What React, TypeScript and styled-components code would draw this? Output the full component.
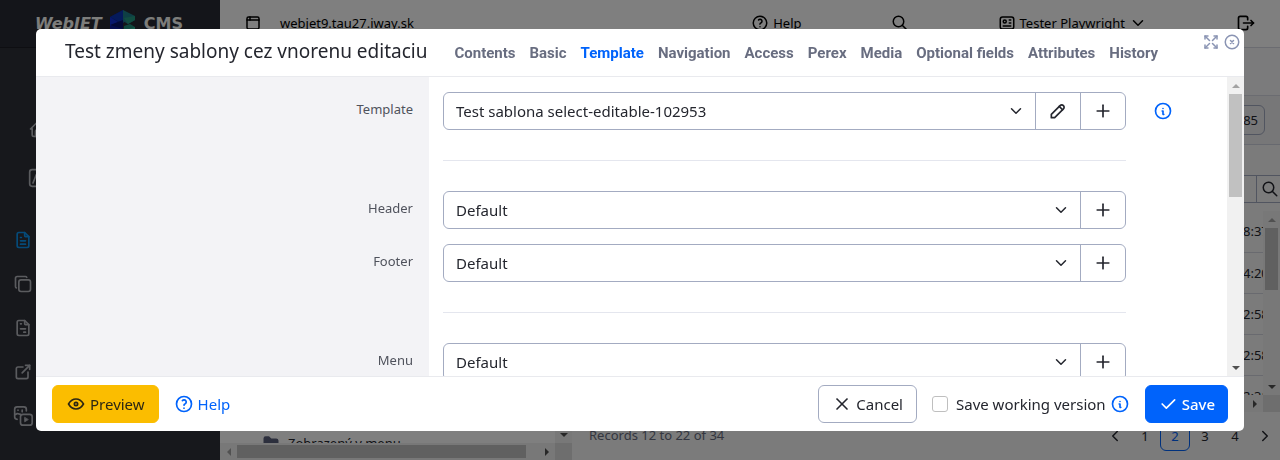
import React from "react";
import styled, { createGlobalStyle, css } from "styled-components";
import {
  TbArrowsMaximize,
  TbBrowser,
  TbCheck,
  TbChevronDown,
  TbChevronLeft,
  TbChevronRight,
  TbCircleX,
  TbCopy,
  TbExternalLink,
  TbEye,
  TbFileInvoice,
  TbFileText,
  TbFolderFilled,
  TbHelp,
  TbHome,
  TbId,
  TbInfoCircle,
  TbLogout,
  TbPencil,
  TbPlus,
  TbSearch,
  TbX,
} from "react-icons/tb";

const color = {
  text: "#24262e",
  muted: "#4f525c",
  tab: "#686d80",
  primary: "#0063fb",
  warning: "#fbbd00",
  border: "#a3abc1",
  line: "#e4e6ee",
  panel: "#f3f3f6",
  track: "#f1f1f1",
  thumb: "#c1c1c1",
};

const GlobalStyle = createGlobalStyle`
  *, *::before, *::after { box-sizing: border-box; }
  body {
    margin: 0;
    color: ${color.text};
    font: 15px/20px "Noto Sans", "Open Sans", sans-serif;
  }
  button, input, select { font: inherit; color: inherit; margin: 0; }
  svg { display: block; flex: none; }
`;

/* ---------- scroll bars ---------- */

const Bar = styled.div<{ $horizontal?: boolean }>`
  display: flex;
  flex: none;
  align-items: center;
  flex-direction: ${(p) => (p.$horizontal ? "row" : "column")};
  background: ${color.track};
  ${(p) => (p.$horizontal ? "height: 17px;" : "width: 17px;")}
`;

const arrowShape = {
  up: css`border-bottom-color: currentColor; border-top-width: 0;`,
  down: css`border-top-color: currentColor; border-bottom-width: 0;`,
  left: css`border-right-color: currentColor; border-left-width: 0;`,
  right: css`border-left-color: currentColor; border-right-width: 0;`,
};

const ArrowBox = styled.span<{ $dim?: boolean }>`
  display: grid;
  place-items: center;
  flex: none;
  width: 17px;
  height: 17px;
  color: ${(p) => (p.$dim ? "#a3a3a3" : "#505050")};
`;

const Arrow = styled.i<{ $dir: keyof typeof arrowShape }>`
  border: 4px solid transparent;
  ${(p) => arrowShape[p.$dir]}
`;

const Track = styled.div<{ $horizontal?: boolean }>`
  display: flex;
  flex: 1;
  align-self: stretch;
  flex-direction: ${(p) => (p.$horizontal ? "row" : "column")};
  padding: ${(p) => (p.$horizontal ? "2px 0" : "0 2px")};
`;

const Thumb = styled.div<{ $share: number }>`
  flex: 0 0 ${(p) => p.$share}%;
  background: ${color.thumb};
`;

type ScrollProps = { horizontal?: boolean; share?: number; atStart?: boolean };

function ScrollBar({ horizontal, share = 0, atStart = true }: ScrollProps) {
  return (
    <Bar $horizontal={horizontal} aria-hidden>
      <ArrowBox $dim={atStart}>
        <Arrow $dir={horizontal ? "left" : "up"} />
      </ArrowBox>
      <Track $horizontal={horizontal}>
        <Thumb $share={share} />
      </Track>
      <ArrowBox>
        <Arrow $dir={horizontal ? "right" : "down"} />
      </ArrowBox>
    </Bar>
  );
}

const BarRow = styled.div`
  display: flex;
  flex: none;
  > :first-child { flex: 1; }
`;

const Corner = styled.div`
  width: 17px;
  background: #dcdcdc;
`;

/* ---------- page behind the dialog ---------- */

const Shell = styled.div`
  display: grid;
  grid-template-columns: 220px minmax(0, 1fr);
  height: 100vh;
  overflow: hidden;
  font-size: 13px;
`;

const Sidebar = styled.aside`
  background: #2e3039;
  color: #b6b8bf;
`;

const Brand = styled.div`
  display: flex;
  align-items: center;
  gap: 8px;
  height: 48px;
  padding: 0 35px;
  background: #292a34;
  border-bottom: 1px solid #1c1d24;
`;

const BrandText = styled.span<{ $slanted?: boolean }>`
  color: #fafaf6;
  font: bold 16px/20px "DejaVu Sans", sans-serif;
  font-style: ${(p) => (p.$slanted ? "italic" : "normal")};
`;

const SideGroup = styled.nav<{ $inset: number; $gap: number; $top: number }>`
  display: flex;
  flex-direction: column;
  gap: ${(p) => p.$gap}px;
  padding: ${(p) => p.$top}px 0 0 ${(p) => p.$inset}px;
`;

const SideLink = styled.a<{ $active?: boolean }>`
  width: 20px;
  color: ${(p) => (p.$active ? "#0a95f2" : "inherit")};
`;

const Main = styled.main`
  display: flex;
  flex-direction: column;
  min-width: 0;
  min-height: 0;
`;

const TopBar = styled.header`
  display: flex;
  flex: none;
  align-items: center;
  gap: 89px;
  height: 48px;
  padding: 0 24px 1px;
  border-bottom: 1px solid #d6d8e2;
`;

const TopItem = styled.a<{ $first?: boolean }>`
  display: flex;
  align-items: center;
  gap: ${(p) => (p.$first ? 18 : 4)}px;
  margin-right: ${(p) => (p.$first ? "auto" : "0")};
  color: #000;
  text-decoration: none;
  white-space: nowrap;
`;

const Heading = styled.div`
  flex: none;
  height: 48px;
  background: #f6f6f8;
  border-bottom: 1px solid #d6d8e2;
`;

const Columns = styled.div`
  display: flex;
  flex: 1;
  min-height: 0;
`;

const Tree = styled.section`
  display: flex;
  flex-direction: column;
  width: 352px;
`;

const TreeView = styled.div`
  display: flex;
  flex: 1;
  min-height: 0;
`;

const TreeItems = styled.div`
  display: flex;
  flex: 1;
  overflow: hidden;
  padding: 335px 0 0 42px;
`;

const TreeItem = styled.a`
  display: flex;
  align-items: center;
  gap: 8px;
  height: 24px;
  color: inherit;
  text-decoration: none;
`;

const Grid = styled.section`
  display: flex;
  flex: 1;
  flex-direction: column;
  min-width: 0;
  background: #f6f6f6;
`;

const Tools = styled.div`
  display: flex;
  flex: none;
  align-items: center;
  justify-content: flex-end;
  height: 49px;
  padding-right: 15px;
  background: #eeeef0;
  border-bottom: 1px solid #cfd2df;
`;

const PageSize = styled.input`
  width: 64px;
  height: 30px;
  padding: 0 6px;
  text-align: right;
  background: transparent;
  border: 1px solid ${color.border};
  border-radius: 6px;
`;

const Filters = styled.div`
  display: flex;
  flex: none;
  justify-content: flex-end;
  height: 66px;
  padding: 30px 0 8px;
`;

const FilterField = styled.input`
  width: 160px;
  border: 1px solid ${color.border};
  border-right: 0;
  background: transparent;
`;

const FilterButton = styled.button`
  display: grid;
  place-items: center;
  width: 24px;
  padding: 0 0 0 3px;
  border: 1px solid ${color.border};
  border-right: 0;
  background: transparent;
`;

const Rows = styled.div`
  display: flex;
  flex: 0 0 184px;
  min-height: 0;
`;

const RowsView = styled.div`
  flex: 1;
  overflow: hidden;
`;

const Table = styled.table`
  width: 100%;
  table-layout: fixed;
  border-collapse: collapse;
`;

const TimeCell = styled.td`
  height: 41px;
  padding: 0;
  border-bottom: 1px solid #d3d5de;
  white-space: nowrap;
  &:last-child { width: 20px; }
`;

const GridFooter = styled.footer`
  display: flex;
  flex: 1;
  align-items: flex-start;
  justify-content: space-between;
  padding: 9px 0 0 17px;
`;

const Records = styled.span`
  color: ${color.tab};
  line-height: 28px;
`;

const Pager = styled.nav`
  display: flex;
`;

const PageLink = styled.a<{ $current?: boolean }>`
  display: grid;
  place-items: center;
  width: 30px;
  height: 30px;
  border: 1px solid ${(p) => (p.$current ? color.primary : "transparent")};
  border-radius: 6px;
  color: ${(p) => (p.$current ? color.primary : "inherit")};
  text-decoration: none;
`;

/* ---------- dialog ---------- */

const Backdrop = styled.div`
  position: fixed;
  inset: 0;
  display: flex;
  padding: 29px 36px;
  background: rgba(0, 0, 0, 0.5);
`;

const Dialog = styled.div`
  display: flex;
  flex: 1;
  flex-direction: column;
  min-width: 0;
  overflow: hidden;
  background: #fff;
  border-radius: 5px;
`;

const DialogHeader = styled.header`
  display: flex;
  flex: none;
  align-items: center;
  gap: 27px;
  height: 48px;
  padding: 0 3px 0 29px;
  border-bottom: 1px solid #e9eaee;
`;

const Title = styled.h1`
  margin: 0;
  padding-bottom: 3px;
  font-size: 19px;
  font-weight: 400;
  line-height: 26px;
  white-space: nowrap;
`;

const Tabs = styled.nav`
  display: flex;
  gap: 14px;
`;

const Tab = styled.a<{ $active?: boolean }>`
  color: ${(p) => (p.$active ? color.primary : color.tab)};
  font-family: Roboto, sans-serif;
  font-weight: 700;
  text-decoration: none;
  white-space: nowrap;
`;

const WindowButtons = styled.div`
  display: flex;
  align-self: flex-start;
  gap: 3px;
  margin-left: auto;
  padding-top: 4px;
`;

const WindowButton = styled.button`
  padding: 0;
  border: 0;
  background: none;
  color: #8a94b3;
`;

const Body = styled.div`
  display: flex;
  flex: 1;
  min-height: 0;
`;

const Form = styled.form`
  flex: 1;
  overflow: hidden;
`;

const FormGrid = styled.div`
  display: grid;
  grid-template-columns: 392fr 713fr 86fr;
  align-content: start;
  row-gap: 15px;
  min-height: 100%;
  padding: 15px 0;
  background: linear-gradient(${color.panel}, ${color.panel}) no-repeat left / 33% 100%;
`;

const Label = styled.label`
  grid-column: 1;
  padding: 7px 15px 11px;
  color: ${color.muted};
  font-size: 13px;
  text-align: right;
`;

const Group = styled.div`
  display: flex;
  grid-column: 2;
  height: 38px;
  margin: 0 15px;
  border: 1px solid ${color.border};
  border-radius: 6px;
`;

const SelectBox = styled.div`
  display: grid;
  flex: 1;
  align-items: center;
  > * { grid-area: 1 / 1; }
  > svg { justify-self: end; margin-right: 10px; pointer-events: none; }
`;

const Select = styled.select`
  width: 100%;
  height: 36px;
  padding: 0 40px 0 12px;
  appearance: none;
  border: 0;
  background: none;
`;

const GroupButton = styled.button`
  display: grid;
  place-items: center;
  width: 45px;
  padding: 0;
  border: 0;
  border-left: 1px solid ${color.border};
  background: none;
`;

const Divider = styled.hr`
  grid-column: 2;
  width: calc(100% - 30px);
  height: 1px;
  margin: 15px;
  border: 0;
  background: ${color.line};
`;

const InfoButton = styled.button<{ $inRow?: boolean }>`
  justify-self: start;
  padding: ${(p) => (p.$inRow ? "0 12px" : "0")};
  border: 0;
  background: none;
  color: ${color.primary};
`;

const DialogFooter = styled.footer`
  display: flex;
  flex: none;
  align-items: center;
  gap: 15px;
  height: 55px;
  padding: 0 16px;
  border-top: 1px solid #e9eaee;
`;

const variants = {
  warning: css`background: ${color.warning}; border-color: ${color.warning}; color: #2c2713;`,
  outline: css`background: #fff; border-color: ${color.border};`,
  primary: css`padding: 0 12px; background: ${color.primary}; border-color: ${color.primary}; color: #fff; font-weight: 500;`,
};

const Button = styled.button<{ $variant: keyof typeof variants }>`
  display: flex;
  align-items: center;
  gap: 4px;
  height: 38px;
  padding: 0 13px;
  border: 1px solid;
  border-radius: 6px;
  white-space: nowrap;
  ${(p) => variants[p.$variant]}
`;

const HelpLink = styled.a`
  display: flex;
  gap: 4px;
  margin-right: auto;
  color: ${color.primary};
  text-decoration: none;
`;

const CheckLabel = styled.label`
  display: flex;
  align-items: center;
  gap: 8px;
  white-space: nowrap;
`;

const CheckBox = styled.input`
  width: 16px;
  height: 16px;
  appearance: none;
  border: 1px solid #bfbfbf;
  border-radius: 3px;
  background: #fff;
`;

const CheckGroup = styled.div`
  display: flex;
  align-items: center;
  gap: 4px;
`;

function BrandMark() {
  return (
    <svg width="26" height="30" viewBox="0 0 26 30" aria-hidden>
      <path d="M13 1 0 8v16l13 6z" fill="#0c1c9c" />
      <path d="M13 1 0 8l13 7z" fill="#0a34b4" />
      <path d="M0 8v9l8-4z" fill="#1030d8" />
      <path d="M0 16l13-5v9z" fill="#07146e" />
      <path d="M13 1v13l5-3z" fill="#165a96" />
      <path d="M13 1l12 6v4l-7 4-5-3z" fill="#1d7f8a" />
      <path d="M14 9l11-2v4l-7 4z" fill="#239a82" />
      <path d="M14 17l6-2 5 3v4l-12 7z" fill="#1f8f7c" />
      <path d="M13 22l12-4v4l-12 8z" fill="#2cae8c" />
    </svg>
  );
}

function StatsBox() {
  return (
    <svg width="20" height="20" viewBox="0 0 24 24" fill="none" stroke="currentColor" strokeWidth="2" strokeLinecap="round" strokeLinejoin="round" aria-hidden>
      <rect x="2" y="2" width="20" height="20" rx="3" />
      <path d="M6 18l4-10 4 8 4-9" />
    </svg>
  );
}

function PlayBoxes() {
  return (
    <svg width="20" height="20" viewBox="0 0 24 24" fill="none" stroke="currentColor" strokeWidth="2" strokeLinecap="round" strokeLinejoin="round" aria-hidden>
      <rect x="9" y="10" width="14" height="13" rx="3" />
      <path d="M5 16a3 3 0 0 1-3-3V4a3 3 0 0 1 3-3h8a3 3 0 0 1 3 3v2M6 5h.01M2 11l3-2 4 1M11 5v2" />
      <path d="M14 14v5l4-2.500z" fill="currentColor" strokeWidth="1" />
    </svg>
  );
}

const tabs = ["Contents", "Basic", "Template", "Navigation", "Access", "Perex", "Media", "Optional fields", "Attributes", "History"];
const times = ["8:37", "4:20", "2:58", "2:58", "2:31"];

type FieldProps = { id: string; label: string; value: string; editable?: boolean; info?: boolean };

function Field({ id, label, value, editable, info }: FieldProps) {
  return (
    <>
      <Label htmlFor={id}>{label}</Label>
      <Group>
        <SelectBox>
          <Select id={id}>
            <option>{value}</option>
          </Select>
          <TbChevronDown size={18} />
        </SelectBox>
        {editable && (
          <GroupButton type="button" aria-label="Edit">
            <TbPencil size={20} />
          </GroupButton>
        )}
        <GroupButton type="button" aria-label="Add">
          <TbPlus size={20} />
        </GroupButton>
      </Group>
      {info && (
        <InfoButton type="button" $inRow aria-label="Info">
          <TbInfoCircle size={20} />
        </InfoButton>
      )}
    </>
  );
}

export default function App() {
  return (
    <>
      <GlobalStyle />
      <Shell>
        <Sidebar>
          <Brand>
            <BrandText $slanted>WebJET</BrandText>
            <BrandMark />
            <BrandText>CMS</BrandText>
          </Brand>
          <SideGroup $inset={28} $gap={29} $top={71}>
            <SideLink href="#" aria-label="Home"><TbHome size={20} /></SideLink>
            <SideLink href="#" aria-label="Statistics"><StatsBox /></SideLink>
          </SideGroup>
          <SideGroup $inset={13} $gap={24} $top={42}>
            <SideLink href="#" $active aria-label="Pages"><TbFileText size={20} /></SideLink>
            <SideLink href="#" aria-label="Copies"><TbCopy size={20} /></SideLink>
            <SideLink href="#" aria-label="Templates"><TbFileInvoice size={20} /></SideLink>
            <SideLink href="#" aria-label="Redirects"><TbExternalLink size={20} /></SideLink>
            <SideLink href="#" aria-label="Media"><PlayBoxes /></SideLink>
          </SideGroup>
        </Sidebar>
        <Main>
          <TopBar>
            <TopItem href="#" $first><TbBrowser size={18} />webjet9.tau27.iway.sk</TopItem>
            <TopItem href="#"><TbHelp size={18} />Help</TopItem>
            <TopItem href="#" aria-label="Search"><TbSearch size={18} /></TopItem>
            <TopItem href="#"><TbId size={18} />Tester Playwright<TbChevronDown size={18} /></TopItem>
            <TopItem href="#" aria-label="Log out"><TbLogout size={20} /></TopItem>
          </TopBar>
          <Heading />
          <Columns>
            <Tree>
              <TreeView>
                <TreeItems>
                  <TreeItem href="#"><TbFolderFilled size={18} color="#595f7a" />Zobrazený v menu</TreeItem>
                </TreeItems>
                <ScrollBar />
              </TreeView>
              <BarRow>
                <ScrollBar horizontal share={96} />
                <Corner />
              </BarRow>
            </Tree>
            <Grid>
              <Tools>
                <PageSize aria-label="ID" defaultValue="85" />
              </Tools>
              <Filters>
                <FilterField aria-label="Filter" />
                <FilterButton aria-label="Search"><TbSearch size={18} /></FilterButton>
              </Filters>
              <Rows>
                <RowsView>
                  <Table>
                    <tbody>
                      {times.map((time, i) => (
                        <tr key={i}>
                          <TimeCell />
                          <TimeCell>{time}</TimeCell>
                        </tr>
                      ))}
                    </tbody>
                  </Table>
                </RowsView>
                <ScrollBar share={41} />
              </Rows>
              <BarRow>
                <ScrollBar horizontal />
                <Corner />
              </BarRow>
              <GridFooter>
                <Records>Records 12 to 22 of 34</Records>
                <Pager>
                  <PageLink href="#" aria-label="Previous"><TbChevronLeft size={18} /></PageLink>
                  <PageLink href="#">1</PageLink>
                  <PageLink href="#" $current>2</PageLink>
                  <PageLink href="#">3</PageLink>
                  <PageLink href="#">4</PageLink>
                  <PageLink href="#" aria-label="Next"><TbChevronRight size={18} /></PageLink>
                </Pager>
              </GridFooter>
            </Grid>
          </Columns>
        </Main>
      </Shell>
      <Backdrop>
        <Dialog role="dialog" aria-labelledby="dialog-title">
          <DialogHeader>
            <Title id="dialog-title">Test zmeny sablony cez vnorenu editaciu</Title>
            <Tabs>
              {tabs.map((name) => (
                <Tab key={name} href="#" $active={name === "Template"}>{name}</Tab>
              ))}
            </Tabs>
            <WindowButtons>
              <WindowButton aria-label="Maximize"><TbArrowsMaximize size={18} /></WindowButton>
              <WindowButton aria-label="Close"><TbCircleX size={18} /></WindowButton>
            </WindowButtons>
          </DialogHeader>
          <Body>
            <Form>
              <FormGrid>
                <Field id="template" label="Template" value="Test sablona select-editable-102953" editable info />
                <Divider />
                <Field id="header" label="Header" value="Default" />
                <Field id="footer" label="Footer" value="Default" />
                <Divider />
                <Field id="menu" label="Menu" value="Default" />
              </FormGrid>
            </Form>
            <ScrollBar share={39} />
          </Body>
          <DialogFooter>
            <Button $variant="warning"><TbEye size={20} />Preview</Button>
            <HelpLink href="#"><TbHelp size={20} />Help</HelpLink>
            <Button $variant="outline"><TbX size={20} />Cancel</Button>
            <CheckGroup>
              <CheckLabel>
                <CheckBox type="checkbox" />
                Save working version
              </CheckLabel>
              <InfoButton type="button" aria-label="Info"><TbInfoCircle size={20} /></InfoButton>
            </CheckGroup>
            <Button $variant="primary"><TbCheck size={20} />Save</Button>
          </DialogFooter>
        </Dialog>
      </Backdrop>
    </>
  );
}
